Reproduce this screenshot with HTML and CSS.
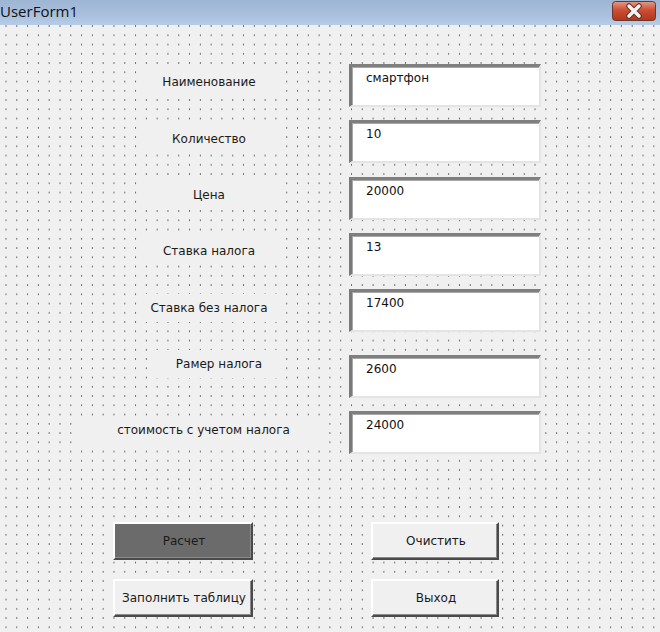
FILE: index.html
```html
<!DOCTYPE html>
<html lang="ru">
<head>
<meta charset="utf-8">
<title>UserForm1</title>
<link rel="stylesheet" href="styles.css">
</head>
<body>
<div class="window">
  <div class="titlebar">
    <span class="title">UserForm1</span>
    <div class="close">
      <svg width="44" height="20" viewBox="0 0 44 20">
        <defs>
          <linearGradient id="cg" x1="0" y1="0" x2="0" y2="1">
            <stop offset="0" stop-color="#e39a85"/>
            <stop offset="0.45" stop-color="#cc4f33"/>
            <stop offset="1" stop-color="#b1351c"/>
          </linearGradient>
        </defs>
        <rect x="0.5" y="0.5" width="43" height="19" rx="3" fill="url(#cg)" stroke="#6e3427"/>
        <path d="M17 5 L27 15 M27 5 L17 15" stroke="#6a3024" stroke-width="5.5" stroke-linecap="round"/>
        <path d="M17 5 L27 15 M27 5 L17 15" stroke="#f4f4f4" stroke-width="3.5" stroke-linecap="round"/>
      </svg>
    </div>
  </div>
  <div class="canvas">
    <div class="fields">
      <div class="row r1">
        <div class="label">Наименование</div>
        <div class="textbox">смартфон</div>
      </div>
      <div class="row r2">
        <div class="label">Количество</div>
        <div class="textbox">10</div>
      </div>
      <div class="row r3">
        <div class="label">Цена</div>
        <div class="textbox">20000</div>
      </div>
      <div class="row r4">
        <div class="label">Ставка налога</div>
        <div class="textbox">13</div>
      </div>
      <div class="row r5">
        <div class="label">Ставка без налога</div>
        <div class="textbox">17400</div>
      </div>
      <div class="row r6">
        <div class="label label-size">Рамер налога</div>
        <div class="textbox">2600</div>
      </div>
      <div class="row r7">
        <div class="label label-total">стоимость с учетом налога</div>
        <div class="textbox">24000</div>
      </div>
    </div>
    <div class="buttons">
      <button class="btn btn-wide btn-active">Расчет</button>
      <button class="btn btn-narrow">Очистить</button>
      <button class="btn btn-wide">Заполнить таблицу</button>
      <button class="btn btn-narrow">Выход</button>
    </div>
  </div>
</div>
</body>
</html>
```
FILE: styles.css
```css
html, body {
  margin: 0;
  padding: 0;
  background: #f0f0f0;
}

.window {
  width: 660px;
  height: 632px;
  overflow: hidden;
  display: flex;
  flex-direction: column;
  font-family: "DejaVu Sans", sans-serif;
}

.titlebar {
  height: 25px;
  flex: none;
  background: linear-gradient(to bottom, #9db6d4 0%, #a9c0dd 60%, #b6cce6 100%);
  display: flex;
  align-items: center;
  justify-content: space-between;
}

.title {
  font-family: "Open Sans", "Noto Sans", sans-serif;
  font-size: 15px;
  color: #111;
  margin-top: -3px;
}

.close {
  width: 44px;
  height: 20px;
  margin-right: 4px;
  margin-top: -4px;
}

.close svg {
  display: block;
}

.canvas {
  flex: 1;
  background-color: #f0f0f0;
  background-image: radial-gradient(circle, #5a5a5a 0px, #5a5a5a 0.4px, rgba(90,90,90,0) 1px);
  background-size: 10.8px 9.25px;
  background-position: 0.6px -3.6px;
  display: flex;
  flex-direction: column;
}

.fields {
  display: flex;
  flex-direction: column;
  padding-top: 39px;
}

.row {
  display: flex;
  align-items: flex-start;
  height: 43px;
  margin-bottom: 13px;
}

.row.r2 { margin-bottom: 14px; }
.row.r5 { margin-bottom: 23px; }

.label {
  box-sizing: border-box;
  width: 136px;
  height: 28px;
  margin-left: 141px;
  margin-top: 4px;
  background: #f0f0f0;
  font-size: 12px;
  line-height: 28px;
  color: #1a1a1a;
  text-align: center;
  white-space: nowrap;
}

.r2 .label, .r5 .label { margin-top: 5px; }

.label.label-size {
  margin-left: 147px;
  margin-top: -5px;
  margin-right: -6px;
  padding-left: 8px;
}

.label.label-total {
  width: 247px;
  margin-left: 80px;
  margin-right: -50px;
  margin-top: 5px;
}

.textbox {
  box-sizing: border-box;
  width: 192px;
  height: 43px;
  margin-left: 72px;
  background: #fff;
  border-left: 3px solid #7a7a7a;
  border-top: 3px solid #7f7f7f;
  border-right: 2px solid #e4e4e4;
  border-bottom: 2px solid #e4e4e4;
  box-shadow: inset 1px 1px 0 #a8a8a8;
  padding: 4px 0 0 14px;
  font-size: 12px;
  line-height: 15px;
  color: #111;
}

.buttons {
  display: grid;
  grid-template-columns: 140px 128px;
  column-gap: 118px;
  row-gap: 19px;
  margin-left: 113px;
  margin-top: 55px;
}

.btn {
  box-sizing: border-box;
  height: 38px;
  background: #f0f0f0;
  border: none;
  border-top: 2px solid #ffffff;
  border-left: 2px solid #ffffff;
  border-right: 2px solid #4a4a4a;
  border-bottom: 2px solid #4a4a4a;
  box-shadow: inset -1px -1px 0 #8a8a8a;
  font-family: "DejaVu Sans", sans-serif;
  font-size: 12px;
  color: #1a1a1a;
  padding: 0 0 0 2px;
  text-align: center;
}

.btn-active {
  background: #6b6b6b;
}
```
